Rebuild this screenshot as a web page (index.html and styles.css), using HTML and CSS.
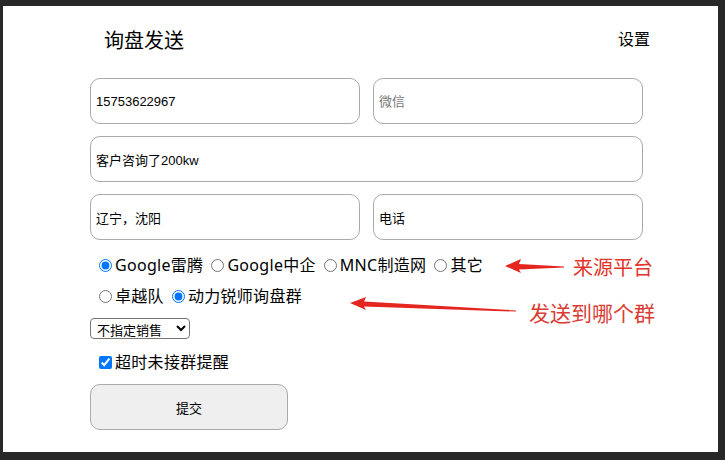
FILE: index.html
```html
<!DOCTYPE html>
<html lang="zh-CN">
<head>
<meta charset="utf-8">
<title>询盘发送</title>
<link rel="stylesheet" href="styles.css">
</head>
<body>
<div class="panel">
  <div class="content">
    <div class="header">
      <div class="title">询盘发送</div>
      <div class="settings">设置</div>
    </div>
    <div class="fields">
      <input class="field" type="text" value="15753622967">
      <input class="field" type="text" placeholder="微信">
      <input class="field wide" type="text" value="客户咨询了200kw">
      <input class="field" type="text" value="辽宁，沈阳">
      <input class="field" type="text" value="电话">
    </div>
    <div class="choice-row first">
      <label class="opt"><input type="radio" name="src" checked>Google雷腾</label>
      <label class="opt"><input type="radio" name="src">Google中企</label>
      <label class="opt"><input type="radio" name="src">MNC制造网</label>
      <label class="opt"><input type="radio" name="src">其它</label>
    </div>
    <div class="choice-row">
      <label class="opt"><input type="radio" name="grp">卓越队</label>
      <label class="opt"><input type="radio" name="grp" checked>动力锐师询盘群</label>
    </div>
    <select class="sales">
      <option>不指定销售</option>
    </select>
    <div class="choice-row check-row">
      <label class="opt"><input type="checkbox" checked>超时未接群提醒</label>
    </div>
    <button class="submit" type="button">提交</button>
  </div>
</div>
<svg class="arrows" width="725" height="460" viewBox="0 0 725 460">
  <polygon points="505,266 521,259 519,264 564,266.6 564,267.6 519,269.5 521,273" fill="#e5261f"/>
  <polygon points="350,303 366,297 364,301.5 516,310.4 516,311.6 364,306.5 366,310" fill="#e5261f"/>
</svg>
<div class="note note-src">来源平台</div>
<div class="note note-grp">发送到哪个群</div>
</body>
</html>
```
FILE: styles.css
```css
html, body {
  margin: 0;
  padding: 0;
}
body {
  background: #282828;
  width: 725px;
  height: 460px;
  position: relative;
  overflow: hidden;
  font-family: "Noto Sans", "Noto Sans CJK SC", sans-serif;
  color: #000;
}
.panel {
  margin: 6px 7px 0 3px;
  height: 446px;
  background: #fff;
  box-sizing: border-box;
  overflow: hidden;
}
.content {
  margin-left: 87px;
  width: 553px;
  display: flex;
  flex-direction: column;
  align-items: flex-start;
}
.header {
  display: flex;
  justify-content: space-between;
  align-items: flex-start;
  width: 560px;
  box-sizing: border-box;
  padding: 20px 0 0 14px;
  height: 48px;
}
.title {
  font-family: "Noto Sans CJK SC", sans-serif;
  font-size: 20px;
  line-height: 28px;
}
.settings {
  font-family: "Noto Sans CJK SC", sans-serif;
  font-size: 16px;
  line-height: 24px;
}
.fields {
  margin-top: 24px;
  display: grid;
  grid-template-columns: 270px 270px;
  column-gap: 13px;
  row-gap: 12px;
}
.field {
  box-sizing: border-box;
  height: 46px;
  width: 100%;
  margin: 0;
  border: 1px solid #aaa;
  border-radius: 10px;
  padding: 0 5px;
  font-family: "Liberation Sans", "Noto Sans CJK SC", sans-serif;
  font-size: 13px;
  color: #000;
  background: #fff;
  outline: none;
}
.field::placeholder {
  color: #777;
}
.field.wide {
  grid-column: 1 / 3;
}
.choice-row {
  display: flex;
  align-items: center;
  height: 22px;
  margin-top: 9px;
  padding-left: 1px;
  font-size: 16px;
  letter-spacing: 0.3px;
}
.choice-row.first {
  margin-top: 14px;
}
.opt {
  display: flex;
  align-items: center;
  line-height: 22px;
  white-space: nowrap;
}
.opt input {
  width: 13px;
  height: 13px;
  margin: 0 3px 0 8px;
}
.sales {
  margin-top: 11px;
  width: 100px;
  height: 21px;
  font-family: "Noto Sans CJK SC", sans-serif;
  font-size: 13px;
  border: 1px solid #767676;
  border-radius: 4px;
  background: #fff;
  color: #000;
  padding: 0 2px;
}
.check-row {
  margin-top: 12px;
}
.submit {
  margin-top: 11px;
  width: 198px;
  height: 46px;
  box-sizing: border-box;
  border: 1px solid #aaa;
  border-radius: 10px;
  background: #efefef;
  font-family: "Noto Sans CJK SC", sans-serif;
  font-size: 13px;
  color: #000;
}
.arrows {
  position: absolute;
  left: 0;
  top: 0;
  pointer-events: none;
}
.note {
  position: absolute;
  font-family: "Noto Sans CJK SC", sans-serif;
  font-size: 20px;
  line-height: 26px;
  color: #e3342b;
  text-shadow: 0 0 2px #fff;
}
.note-src {
  left: 573px;
  top: 254px;
}
.note-grp {
  left: 529px;
  top: 299px;
  font-size: 21px;
  color: #d93b33;
}
```
